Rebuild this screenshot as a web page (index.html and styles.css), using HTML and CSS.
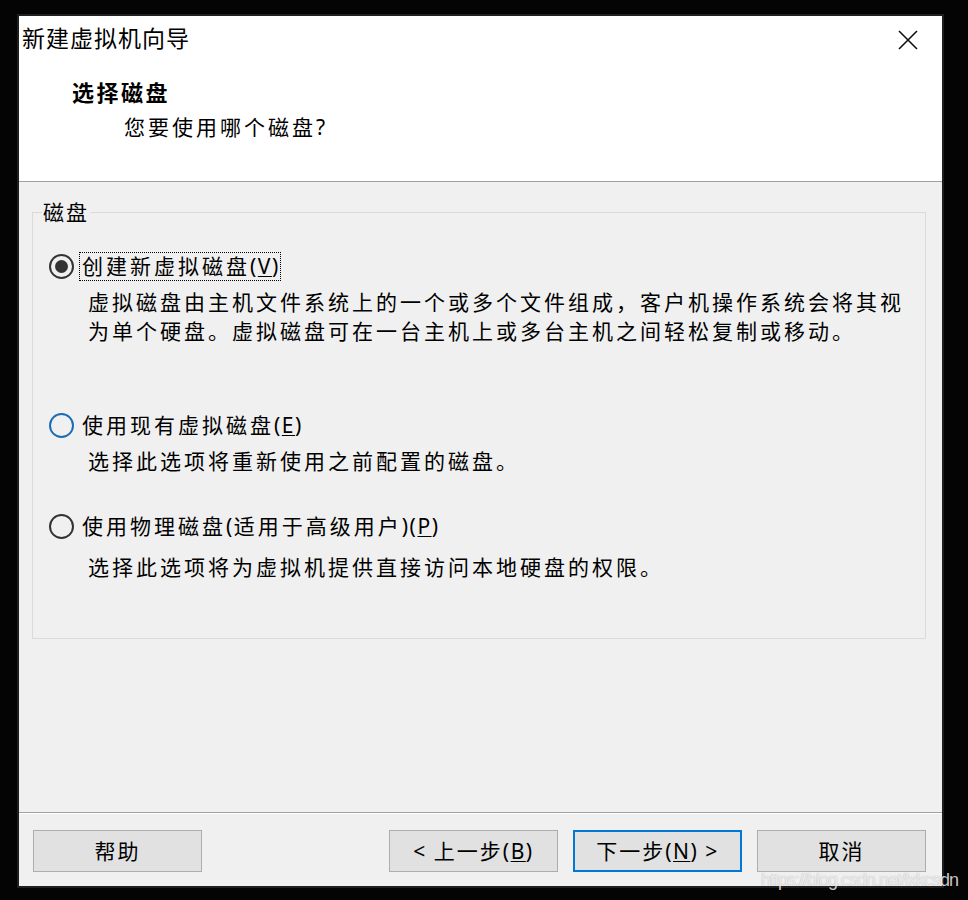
FILE: index.html
```html
<!DOCTYPE html>
<html lang="zh-CN">
<head>
<meta charset="utf-8">
<title>新建虚拟机向导</title>
<link rel="stylesheet" href="styles.css">
</head>
<body>
<div class="dialog">
  <div class="header">
    <div class="titlebar">
      <span class="title">新建虚拟机向导</span>
      <svg class="close" width="20" height="20" viewBox="0 0 20 20"><path d="M1 1 L19 19 M19 1 L1 19" stroke="#111" stroke-width="1.6" fill="none"/></svg>
    </div>
    <div class="heading">选择磁盘</div>
    <div class="subheading">您要使用哪个磁盘<span class="lat">?</span></div>
  </div>
  <div class="content">
    <fieldset class="group">
      <legend class="legend">磁盘</legend>
      <div class="option opt1">
        <span class="radio checked"><span class="dot"></span></span>
        <span class="label focus">创建新虚拟磁盘<span class="lat">(<u>V</u>)</span></span>
      </div>
      <div class="desc desc1">虚拟磁盘由主机文件系统上的一个或多个文件组成，客户机操作系统会将其视<br>为单个硬盘。虚拟磁盘可在一台主机上或多台主机之间轻松复制或移动。</div>
      <div class="option opt2">
        <span class="radio hover"></span>
        <span class="label">使用现有虚拟磁盘<span class="lat">(<u>E</u>)</span></span>
      </div>
      <div class="desc desc2">选择此选项将重新使用之前配置的磁盘。</div>
      <div class="option opt3">
        <span class="radio"></span>
        <span class="label">使用物理磁盘<span class="lat">(</span>适用于高级用户<span class="lat">)(<u>P</u>)</span></span>
      </div>
      <div class="desc desc3">选择此选项将为虚拟机提供直接访问本地硬盘的权限。</div>
    </fieldset>
  </div>
  <div class="footer">
    <button class="btn">帮助</button>
    <div class="btn-group">
      <button class="btn"><span class="lat">&lt;&nbsp;</span>上一步<span class="lat">(<u>B</u>)</span></button>
      <button class="btn default">下一步<span class="lat">(<u>N</u>)&nbsp;&gt;</span></button>
      <button class="btn">取消</button>
    </div>
  </div>
</div>
<div class="watermark">https://blog.csdn.net/lxkcsdn</div>
</body>
</html>
```
FILE: styles.css
```css
html, body {
  margin: 0;
  padding: 0;
  background: #040404;
}
body {
  position: relative;
  width: 968px;
  height: 900px;
  overflow: hidden;
  font-family: "Noto Sans", "Noto Sans CJK SC", sans-serif;
  color: #000;
}
.dialog {
  margin: 14px 0 0 17px;
  width: 923px;
  height: 870px;
  border: 2px solid #1f1f1f;
  background: #f0f0f0;
  display: flex;
  flex-direction: column;
}
.header {
  background: #fff;
  border-bottom: 1px solid #a0a0a0;
  padding-top: 6px;
  box-sizing: content-box;
  height: 159px;
}
.titlebar {
  display: flex;
  justify-content: space-between;
  align-items: center;
  height: 32px;
  padding-left: 3px;
  padding-right: 24px;
}
.title {
  font-size: 23px;
  line-height: 32px;
  letter-spacing: 1px;
}
.close {
  display: block;
  margin-top: 4px;
}
.heading {
  margin-top: 23px;
  padding-left: 53px;
  font-size: 22px;
  font-weight: bold;
  line-height: 30px;
  letter-spacing: 2.5px;
}
.subheading {
  margin-top: 5px;
  padding-left: 105px;
  font-size: 21px;
  line-height: 30px;
  letter-spacing: 3px;
}
.lat {
  letter-spacing: 1.5px;
}
.content {
  flex: 1;
  padding-top: 16px;
}
.group {
  margin: 0 0 0 13px;
  padding: 0;
  width: 894px;
  height: 441px;
  box-sizing: border-box;
  border: 1px solid #dadada;
  min-width: 0;
}
.legend {
  margin-left: 9px;
  padding: 0 1px;
  font-size: 21px;
  line-height: 28px;
  letter-spacing: 2px;
}
.option {
  display: flex;
  align-items: center;
  padding-left: 16px;
  height: 29px;
}
.opt1 { margin-top: 26px; }
.opt2 { margin-top: 65px; }
.opt3 { margin-top: 36px; }
.radio {
  width: 25px;
  height: 25px;
  box-sizing: border-box;
  border: 2px solid #333;
  border-radius: 50%;
  display: flex;
  align-items: center;
  justify-content: center;
  flex: none;
}
.radio.hover {
  border-color: #1c6cb4;
}
.dot {
  width: 13px;
  height: 13px;
  border-radius: 50%;
  background: #333;
}
.label {
  margin-left: 5px;
  padding: 0 0 0 2px;
  border: 1px dotted transparent;
  font-size: 21px;
  line-height: 27px;
  letter-spacing: 3px;
  white-space: nowrap;
}
.label.focus {
  border-color: #000;
}
.desc {
  padding-left: 55px;
  font-size: 21px;
  line-height: 29px;
  letter-spacing: 3px;
  white-space: nowrap;
}
.desc1 { margin-top: 7px; }
.desc2 { margin-top: 7px; }
.desc3 { margin-top: 12px; }
u {
  text-decoration-thickness: 1px;
  text-underline-offset: 2px;
}
.footer {
  border-top: 1px solid #a0a0a0;
  box-shadow: inset 0 1px #fff;
  display: flex;
  align-items: flex-start;
  justify-content: space-between;
  padding: 17px 16px 0 14px;
  box-sizing: content-box;
  height: 56px;
}
.btn-group {
  display: flex;
  gap: 15px;
}
.btn {
  width: 169px;
  height: 42px;
  box-sizing: border-box;
  background: #e1e1e1;
  border: 1px solid #adadad;
  font-family: "Noto Sans", "Noto Sans CJK SC", sans-serif;
  font-size: 21px;
  letter-spacing: 2px;
  color: #000;
  padding: 0;
  line-height: 38px;
}
.btn.default {
  border: 2px solid #0078d7;
}
.watermark {
  position: absolute;
  left: 761px;
  top: 869px;
  font-family: "Liberation Sans", Arial, sans-serif;
  font-size: 18px;
  letter-spacing: -1px;
  line-height: 22px;
  color: rgba(255, 255, 255, 0.78);
  text-shadow: 0 0 1px rgba(0, 0, 0, 0.35);
  white-space: nowrap;
}
```
